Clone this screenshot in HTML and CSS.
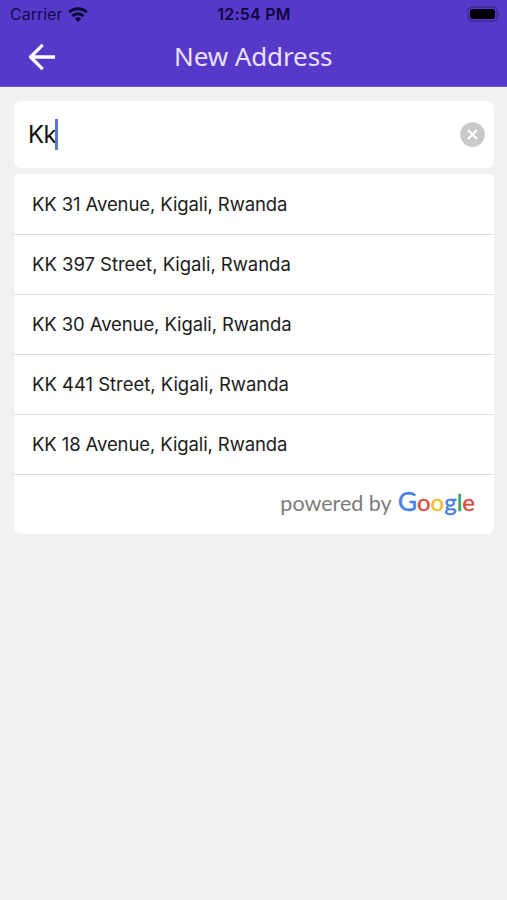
FILE: index.html
```html
<!DOCTYPE html>
<html lang="en">
<head>
<meta charset="utf-8">
<title>New Address</title>
<link rel="stylesheet" href="styles.css">
</head>
<body>
<header class="header">
  <div class="status">
    <div class="carrier"><span class="carrier-name">Carrier</span>
      <svg class="wifi" width="20" height="15" viewBox="0 0 20 15" fill="none" stroke="#0d0638" stroke-width="3">
        <path d="M1.2 5.3a12.6 12.6 0 0 1 17.6 0"/>
        <path d="M4.5 9.1a7.9 7.9 0 0 1 11 0"/>
        <path d="M10 14.9l-3.1-3.2a4.5 4.5 0 0 1 6.2 0z" fill="#0d0638" stroke="none"/>
      </svg>
    </div>
    <span class="clock">12:54 PM</span>
    <svg class="battery" width="34" height="16" viewBox="0 0 34 16">
      <rect x="2" y="1" width="29" height="14" rx="4" fill="none" stroke="#3f2a91" stroke-width="1.5"/>
      <rect x="4" y="3" width="25" height="10" rx="2.3" fill="#020006"/>
      <path d="M32.3 5.7q1.5.8 1.5 2.3t-1.5 2.3z" fill="#3f2a91"/>
    </svg>
  </div>
  <div class="nav">
    <svg class="back" width="28" height="28" viewBox="0 0 28 28" fill="none" stroke="#fff" stroke-width="3.3" stroke-linejoin="round">
      <path d="M27 14H3M14.7 1.8L2.5 14l12.2 12.2"/>
    </svg>
    <h1 class="title">New Address</h1>
  </div>
</header>
<main class="content">
  <div class="search">
    <span class="query">Kk</span><span class="caret"></span>
    <svg class="clear" width="25" height="25" viewBox="0 0 25 25">
      <circle cx="12.5" cy="12.5" r="12.3" fill="#c9c9c9"/>
      <path d="M8 8l9 9M17 8l-9 9" stroke="#fff" stroke-width="2.2"/>
    </svg>
  </div>
  <ul class="results">
    <li class="row tight">KK 31 Avenue, Kigali, Rwanda</li>
    <li class="row">KK 397 Street, Kigali, Rwanda</li>
    <li class="row tight">KK 30 Avenue, Kigali, Rwanda</li>
    <li class="row">KK 441 Street, Kigali, Rwanda</li>
    <li class="row tight">KK 18 Avenue, Kigali, Rwanda</li>
    <li class="credit"><span class="powered">powered by</span><span class="google"><span class="blue big">G</span><span class="red">o</span><span class="yellow">o</span><span class="blue">g</span><span class="green">l</span><span class="red">e</span></span></li>
  </ul>
</main>
</body>
</html>
```
FILE: styles.css
```css
* { box-sizing: border-box; }
body { margin: 0; min-height: 900px; background: #f1f1f1; font-family: Inter, sans-serif; }
.header { height: 87px; background: #5639c9; border-bottom: 1px solid #6d57bd; }
.status { height: 28px; padding: 0 7px 0 10px; display: grid; grid-template-columns: 1fr auto 1fr; align-items: center; color: #170a4f; }
.carrier { display: flex; align-items: center; gap: 6px; font-size: 16px; line-height: 20px; }
.clock { font-size: 16px; line-height: 20px; font-weight: 600; letter-spacing: 0.25px; margin-right: 2px; color: #10053f; }
.battery { justify-self: end; }
.nav { height: 57px; display: flex; align-items: center; padding-left: 28px; }
.back { flex: none; }
.title { margin: 0 0 1px 118px; font: 400 26px/36px "Noto Sans", sans-serif; letter-spacing: -0.1px; color: #eae0fb; white-space: nowrap; }
.content { padding: 14px 13px 0 14px; }
.search { height: 67px; background: #fff; border-radius: 7px; display: flex; align-items: center; padding: 0 9px 0 14px; }
.query { font-size: 24px; line-height: 30px; letter-spacing: -0.7px; color: #111; }
.caret { width: 3px; height: 31px; background: #5878d5; margin-left: -1px; }
.clear { margin-left: auto; }
.results { list-style: none; margin: 6px 0 0; padding: 0; background: #fff; border-radius: 4px 4px 7px 7px; }
.row { height: 60px; padding: 0 18px; display: flex; align-items: center; font-size: 18.5px; letter-spacing: -0.025px; color: #1c1c1c; white-space: nowrap; }
.tight { letter-spacing: -0.105px; }
.row + .row, .credit { box-shadow: inset 0 1px #dedede; }
.credit { height: 60px; display: flex; align-items: baseline; justify-content: flex-end; padding: 10px 19px 0 0; font-family: Lato, sans-serif; line-height: 34px; white-space: nowrap; }
.powered { color: #7c7c7c; font-size: 21.5px; margin-right: 6px; }
.google { font-size: 24px; -webkit-text-stroke: 0.4px; }
.big { font-size: 26.5px; }
.blue { color: #4580e8; }
.red { color: #e04a3f; }
.yellow { color: #f3bd25; }
.green { color: #35a35a; }
```
